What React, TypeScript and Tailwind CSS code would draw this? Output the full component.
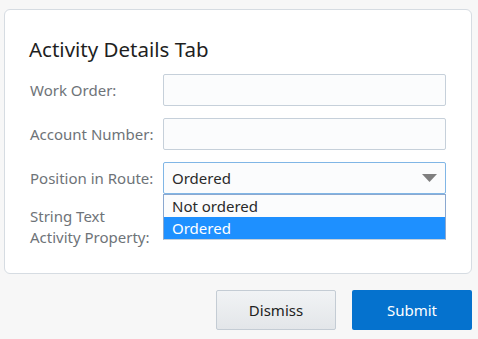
import React from 'react';

const Field = ({ label, children }: { label: React.ReactNode; children: React.ReactNode }) => (
  <div className="grid grid-cols-[133px_283px] items-center min-h-[32px]">
    <div className="text-[15px] leading-[21px] text-[#6e7378]">{label}</div>
    {children}
  </div>
);

const TextInput = () => (
  <div className="h-[32px] rounded-[2px] border border-[#c6d0da] bg-[#fbfcfd]" />
);

export default function App() {
  return (
    <div
      className="w-[478px] h-[339px] bg-[#f7f7f7] pt-[9px] pl-[4px]"
      style={{ fontFamily: '"Noto Sans", "Open Sans", sans-serif' }}
    >
      <div className="w-[468px] h-[265px] rounded-[6px] border border-[#d6dce2] bg-white pl-[25px] pt-[24px]">
        <h2 className="text-[20.5px] leading-[30px] text-[#1f1f1f] mb-[10px] -ml-[1px]">Activity Details Tab</h2>
        <div className="flex flex-col gap-[12px]">
          <Field label="Work Order:">
            <TextInput />
          </Field>
          <Field label="Account Number:">
            <TextInput />
          </Field>
          <Field label="Position in Route:">
            <div className="relative">
              <div className="h-[32px] rounded-[2px] border border-[#80b6e6] bg-[#fbfcfd] flex items-center justify-between pl-[8px] pr-[8px]">
                <span className="text-[15px] text-[#2a2a2a]">Ordered</span>
                <svg width="15" height="8" viewBox="0 0 15 8">
                  <path d="M0 0 L15 0 L7.5 8 Z" fill="#7f7f7f" />
                </svg>
              </div>
              <div className="absolute left-0 top-[32px] w-full z-10 border border-[#8aa8d0] border-b-[#c6d0da] bg-[#fbfcfd] text-[15px]">
                <div className="h-[22px] leading-[22px] pl-[8px] text-[#2a2a2a]">Not ordered</div>
                <div className="h-[22px] leading-[22px] pl-[8px] bg-[#1e90ff] text-white">Ordered</div>
              </div>
            </div>
          </Field>
          <div className="grid grid-cols-[133px_283px] items-start">
            <div className="text-[15px] leading-[21px] text-[#6e7378]">
              String Text
              <br />
              Activity Property:
            </div>
            <TextInput />
          </div>
        </div>
      </div>
      <div className="flex justify-end gap-[16px] pr-[6px] mt-[16px]">
        <button className="w-[120px] h-[40px] rounded-[2px] border border-[#c4ccd4] bg-gradient-to-b from-[#f1f3f5] to-[#e3e6e9] text-[15px] text-[#222]">
          Dismiss
        </button>
        <button className="w-[120px] h-[40px] rounded-[2px] bg-[#0572ce] text-[15px] text-white">
          Submit
        </button>
      </div>
    </div>
  );
}
